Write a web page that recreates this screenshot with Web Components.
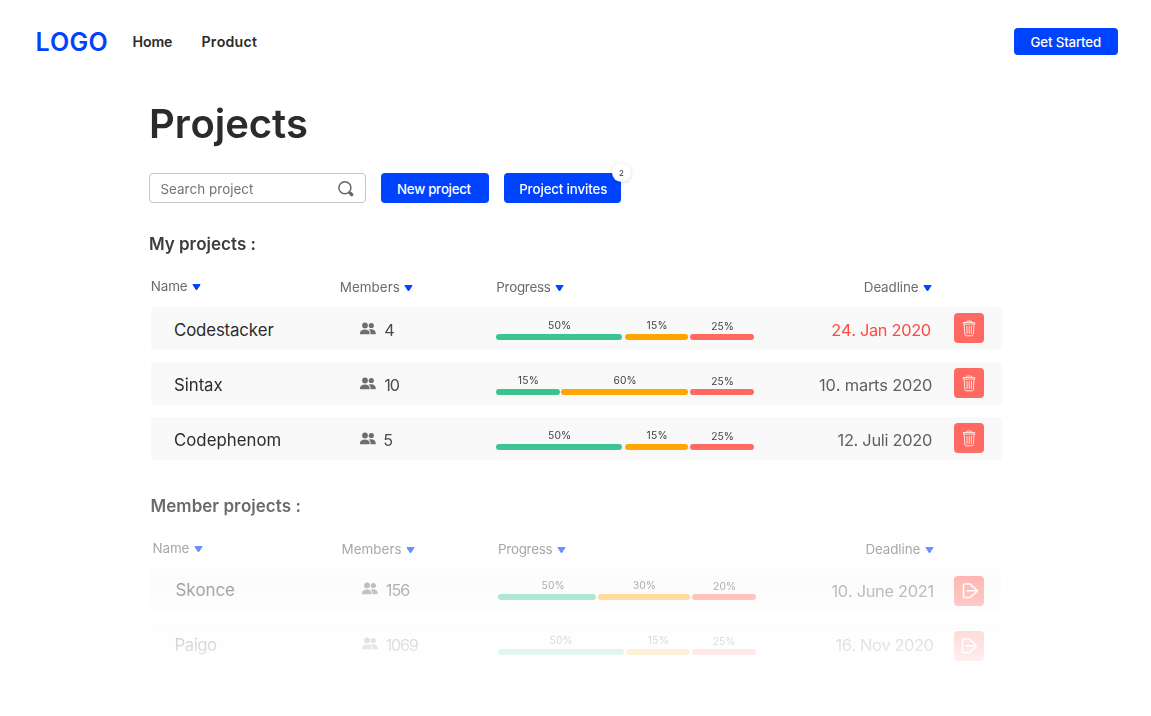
<!DOCTYPE html>
<html lang="en">
<head>
<meta charset="utf-8">
<title>Projects</title>
<style>
html,body{margin:0;background:#fff;height:716px;overflow:hidden}
body{font-family:Inter,"Liberation Sans",sans-serif;color:#2b2b2b}
</style>
</head>
<body>
<projects-app></projects-app>
<script>
const ctx = document.createElement('canvas').getContext('2d');

/* A line of text, tracked so that its ink spans the given width. */
class FitText extends HTMLElement {
  constructor() {
    super();
    this.attachShadow({mode: 'open'}).innerHTML =
      '<style>:host{display:block;white-space:pre;flex:none;font-kerning:none;font-variant-ligatures:none}</style><slot></slot>';
  }
  connectedCallback() {
    const w = parseFloat(this.getAttribute('w'));
    const t = this.textContent;
    const cs = getComputedStyle(this);
    ctx.font = `${cs.fontWeight} ${cs.fontSize} ${cs.fontFamily}`;
    ctx.fontKerning = 'none';
    const m = ctx.measureText(t);
    const ink = m.actualBoundingBoxRight + m.actualBoundingBoxLeft;
    const ls = t.length > 1 ? (w - ink) / (t.length - 1) : 0;
    this.style.letterSpacing = ls + 'px';
    this.style.textIndent = m.actualBoundingBoxLeft + 'px';
    this.style.width = w + 'px';
  }
}

class AppButton extends HTMLElement {
  constructor() {
    super();
    this.attachShadow({mode: 'open'}).innerHTML = `<style>
      :host{display:flex;align-items:center;justify-content:center;position:relative;flex:none;box-sizing:border-box;
        background:#0043ff;color:#fff;border-radius:4px;font-size:13.3px;font-weight:500;line-height:20px}
      ::slotted([slot=badge]){position:absolute;right:-10px;top:-10px}
      </style><slot></slot><slot name="badge"></slot>`;
  }
}

class CountBadge extends HTMLElement {
  constructor() {
    super();
    this.attachShadow({mode: 'open'}).innerHTML = `<style>
      :host{display:flex;align-items:center;justify-content:center;width:19px;height:19px;border-radius:50%;
        background:#fff;color:#333;font-size:8px;font-weight:400;line-height:20px;box-shadow:0 1px 4px rgba(0,0,0,.16)}
      </style><slot></slot>`;
  }
}

class NavBar extends HTMLElement {
  constructor() {
    super();
    this.attachShadow({mode: 'open'}).innerHTML = `<style>
      :host{display:flex;align-items:center;height:84px;padding:0 33.5px 0 36.5px;box-sizing:border-box}
      .logo{font-size:25px;font-weight:600;color:#0043ff;margin-right:27px}
      .link{font-size:14.2px;font-weight:600;line-height:20px;color:#2b2b2b;margin:0 30.5px 0 0}
      app-button{width:103.5px;height:27px;margin:-2px 0 0 auto;padding-top:1px}
      </style>
      <fit-text class="logo" w="70">LOGO</fit-text>
      <fit-text class="link" w="38.5">Home</fit-text>
      <fit-text class="link" w="54.5">Product</fit-text>
      <app-button><fit-text w="70.5">Get Started</fit-text></app-button>`;
  }
}

class SearchBox extends HTMLElement {
  constructor() {
    super();
    this.attachShadow({mode: 'open'}).innerHTML = `<style>
      :host{display:flex;align-items:center;justify-content:space-between;box-sizing:border-box;width:217px;height:30px;
        border:1px solid #c4c4c4;border-radius:4px;padding:2px 11px 0 10.5px;font-size:13.4px;line-height:20px;color:#737373}
      svg{margin-top:-1px}
      </style>
      <fit-text w="93.5">Search project</fit-text>
      <svg width="16" height="16" viewBox="0 0 16 16" fill="none" stroke="#666" stroke-linecap="round">
        <circle cx="6.9" cy="6.8" r="6" stroke-width="1.5"/><path d="M11.2 11.1l1.4 1.4" stroke-width="1.6"/><path d="M12.5 12.4l1.2 1.2" stroke-width="3.4"/></svg>`;
  }
}

class SortHeader extends HTMLElement {
  constructor() {
    super();
    this.attachShadow({mode: 'open'}).innerHTML = `<style>
      :host{display:flex;align-items:center;gap:4px;font-size:13.4px;line-height:20px;color:#6b6b6b}
      svg{flex:none;margin-top:2px}
      </style><slot></slot>
      <svg width="9" height="7" viewBox="0 0 9 7"><path d="M.9.6h7.2L4.5 6z" fill="#0043ff" stroke="#0043ff" stroke-width="1" stroke-linejoin="round"/></svg>`;
  }
}

class ProgressBar extends HTMLElement {
  connectedCallback() {
    /* value : bar width : label width : label shift */
    const parts = this.getAttribute('parts').split(' ').map(p => p.split(':'));
    const gaps = (this.getAttribute('gaps') || '3 2').split(' ');
    this.attachShadow({mode: 'open'}).innerHTML = `<style>
      :host{display:flex;height:43px}
      .seg{display:flex;flex-direction:column;align-items:center;flex:none}
      fit-text{font-size:10.3px;line-height:14px;color:#3f3f3f;margin-top:var(--label-top,11px);margin-bottom:2px}
      i{display:block;width:100%;height:6px;border-radius:3px}
      </style>` + parts.map(([v, w, lw, dx], k) => `<div class="seg" style="width:${w}px;margin-right:${gaps[k] || 0}px">
        <fit-text w="${lw}" style="transform:translate(${dx || 0}px,${k === 2 ? 1 : 0}px)">${v}%</fit-text>
        <i style="background:${['#3bc48f', '#ffa502', '#ff6961'][k]}"></i></div>`).join('');
  }
}

class ActionButton extends HTMLElement {
  connectedCallback() {
    const icons = {
      trash: `<svg width="30" height="30" viewBox="0 0 30 30" fill="none" stroke="#fff" stroke-opacity=".85" stroke-width=".95" stroke-linecap="round" stroke-linejoin="round">
        <rect x="9.2" y="9.5" width="11.8" height="1.6" rx=".8"/><path d="M12.1 9.3l1-1.3h4l1 1.3M10.2 11.3l.6 10c.1 1 .6 1.5 1.5 1.5h5.6c.9 0 1.4-.5 1.5-1.5l.6-10M12.9 13.3l.2 7.2M15.2 13.3v7.2M17.5 13.3l-.2 7.2"/></svg>`,
      leave: `<svg width="30" height="30" viewBox="0 0 30 30" fill="none" stroke="#fff" stroke-width="1.5" stroke-linecap="round" stroke-linejoin="round">
        <path d="M17.8 10.7V9.4L16.4 8h-5.9c-.7 0-1 .4-1 1.1v11.3c0 .7.3 1.1 1 1.1h5.9l1.4-1.4v-1.3M13.2 14.8h10M19.4 10.700l4.100 4.100-4.100 4.100"/></svg>`
    };
    this.attachShadow({mode: 'open'}).innerHTML = `<style>
      :host{display:block;width:30px;height:30px;border-radius:4px;background:#ff6961}svg{display:block;transform:translateX(var(--icon-x,0))}
      </style>` + icons[this.getAttribute('icon')];
  }
}

class ProjectRow extends HTMLElement {
  connectedCallback() {
    const a = n => this.getAttribute(n);
    const f = n => { const [t, w] = a(n).split('|'); return `<fit-text w="${w}">${t}</fit-text>`; };
    this.attachShadow({mode: 'open'}).innerHTML = `<style>
      :host{display:grid;grid-template-columns:186px 136px 258px 178px 30px;height:43px;box-sizing:border-box;
        padding-left:var(--pad,23px);background:#f9f9f9;border-radius:4px;font-size:16.8px;line-height:20px}
      .name{padding:var(--text-top,12.7px) 0 0 0;color:#2b2b2b}
      .mem{display:flex;gap:8.3px;padding-top:var(--text-top,12.7px);color:#4b4b4b;font-size:16.2px}
      .mem svg{flex:none;margin-top:var(--icon-top,2px)}
      .date{display:flex;justify-content:flex-end;padding:var(--date-top,13px) 0 0;color:${a('late') !== null ? '#ff4b42' : '#5f5f5f'};font-size:16.4px}
      .date fit-text{margin-right:${a('late') !== null ? 1.2 : 0}px}
      action-button{margin:var(--btn-top,6px) 0 0 var(--btn-gap,22px)}
      </style>
      <div class="name">${f('name')}</div>
      <div class="mem"><svg width="16" height="13" viewBox="0 0 16 13" fill="#6e6e6e"><circle cx="5" cy="3.4" r="2.9"/><circle cx="11.3" cy="3.5" r="2.6"/><path d="M0 12.3v-1.2C0 8.8 2.2 7.5 5 7.5s4.6 1.3 4.6 3.6v1.2zM10.5 12.3v-1.2c0-1.5-.7-2.7-1.7-3.5.7-.3 1.5-.4 2.4-.4 2.500 0 4.500 1.400 4.500 3.700v1.400z"/></svg>${f('members')}</div>
      <progress-bar parts="${a('parts')}" gaps="${a('gaps') || '3 2'}"></progress-bar>
      <div class="date">${f('deadline')}</div>
      <action-button icon="${a('icon')}"></action-button>`;
  }
}

class ProjectTable extends HTMLElement {
  constructor() {
    super();
    this.attachShadow({mode: 'open'}).innerHTML = `<style>
      :host{display:block}
      .title{font-size:17px;font-weight:600;line-height:24px;color:#3d3d3d;margin-left:var(--title-x,1px)}
      .heads{display:grid;grid-template-columns:189px 156.5px 367.5px auto;padding:20px 0 0 var(--head-x,2.8px);height:31px}
      .heads sort-header:not(:first-child){margin-top:1px}
      .heads sort-header{height:20px}
      .rows{display:flex;flex-direction:column;gap:12px;margin-left:var(--rows-x,2px);width:851px}
      </style>
      <div class="title"><slot name="title"></slot></div>
      <div class="heads">
        <sort-header><fit-text w="36">Name</fit-text></sort-header>
        <sort-header><fit-text w="59">Members</fit-text></sort-header>
        <sort-header><fit-text w="53.5">Progress</fit-text></sort-header>
        <sort-header><fit-text w="54">Deadline</fit-text></sort-header>
      </div>
      <div class="rows"><slot></slot></div>`;
  }
}

class ProjectsApp extends HTMLElement {
  constructor() {
    super();
    this.attachShadow({mode: 'open'}).innerHTML = `<style>
      :host{display:block;height:716px;overflow:hidden}
      main{height:632px;padding-left:149px;box-sizing:border-box;
        -webkit-mask-image:linear-gradient(#000 358px,rgba(0,0,0,.77) 422px,rgba(0,0,0,.6) 465px,rgba(0,0,0,.4) 513px,rgba(0,0,0,.15) 568px,rgba(0,0,0,.1) 580px,transparent 600px)}
      h1{margin:0;padding:16px 0 0 2px;font-size:40px;font-weight:600;line-height:48px;color:#2b2b2b}
      .tools{display:flex;height:30px;margin-top:25px}
      .tools app-button:nth-of-type(1){width:108.5px;margin:0 14.5px}
      .tools app-button:nth-of-type(2){width:117.5px;padding-left:3px}
      .tools app-button{padding-top:1px}
      .mine{margin-top:29px}
      .theirs{margin-top:34px;--title-x:2.5px;--head-x:4.5px;--rows-x:1px;--pad:25.5px;--text-top:11px;--icon-top:1.5px;--date-top:12px;--label-top:9px;--btn-top:7px;--btn-gap:20.5px}
      .theirs project-row:last-of-type{height:31px;--icon-x:-1px;--date-top:11px}
      </style>
      <nav-bar></nav-bar>
      <main>
        <h1><fit-text w="156">Projects</fit-text></h1>
        <div class="tools">
          <search-box></search-box>
          <app-button><fit-text w="73.5">New project</fit-text></app-button>
          <app-button><fit-text w="87">Project invites</fit-text><count-badge slot="badge">2</count-badge></app-button>
        </div>
        <project-table class="mine">
          <fit-text slot="title" w="105.5">My projects :</fit-text>
          <project-row name="Codestacker|99.5" members="4|9" parts="50:126:22 15:63:20 25:64:21.5" deadline="24. Jan 2020|98.5" late icon="trash"></project-row>
          <project-row name="Sintax|48.5" members="10|15.5" parts="15:63.5:20 60:127:22 25:64:21.5" gaps="1.5 2" deadline="10. marts 2020|113" icon="trash"></project-row>
          <project-row name="Codephenom|106.5" members="5|8.5" parts="50:126:22 15:63:20 25:64:21.5" deadline="12. Juli 2020|94.5" icon="trash"></project-row>
        </project-table>
        <project-table class="theirs">
          <fit-text slot="title" w="149">Member projects :</fit-text>
          <project-row name="Skonce|58.5" members="156|24.5" parts="50:98:22:6 30:92.5:22 20:64:22" gaps="2 2" deadline="10. June 2021|102" icon="leave"></project-row>
          <project-row name="Paigo|41.5" members="1069|33" parts="50:126:22 15:63.5:20 25:64:21.5" gaps="2.5 2" deadline="16. Nov 2020|98" icon="leave"></project-row>
        </project-table>
      </main>`;
  }
}

customElements.define('fit-text', FitText);
customElements.define('count-badge', CountBadge);
customElements.define('app-button', AppButton);
customElements.define('nav-bar', NavBar);
customElements.define('search-box', SearchBox);
customElements.define('sort-header', SortHeader);
customElements.define('progress-bar', ProgressBar);
customElements.define('action-button', ActionButton);
customElements.define('project-row', ProjectRow);
customElements.define('project-table', ProjectTable);
customElements.define('projects-app', ProjectsApp);
</script>
</body>
</html>
